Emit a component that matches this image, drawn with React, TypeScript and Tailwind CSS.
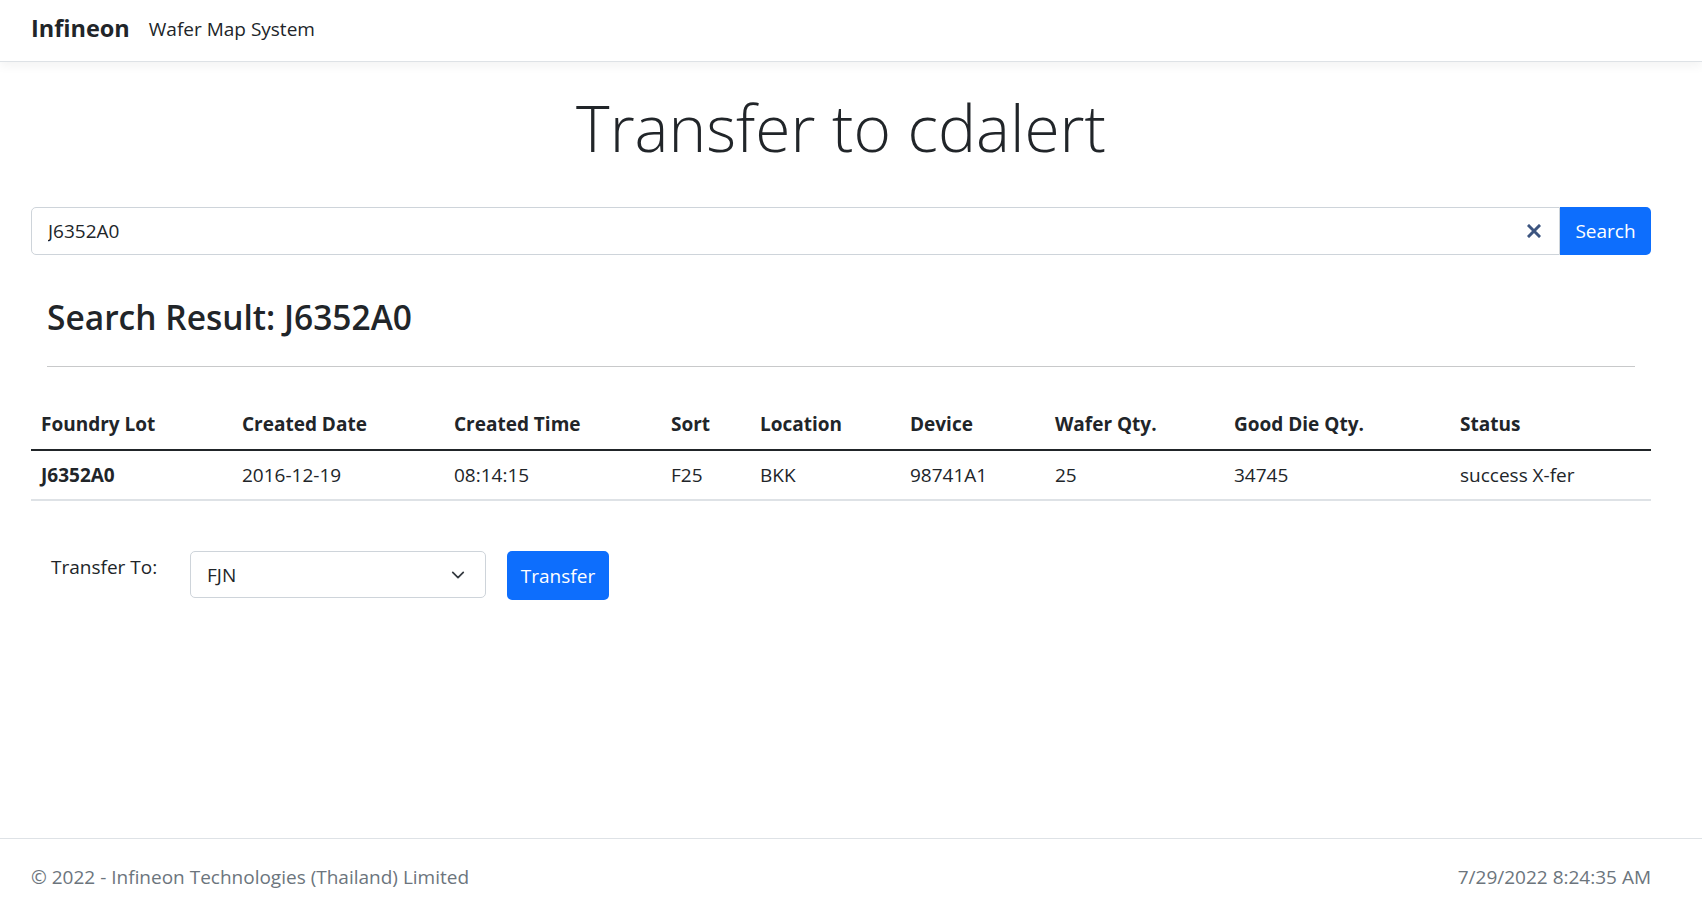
const columns = [
  { label: "Foundry Lot", width: "w-[201px]" },
  { label: "Created Date", width: "w-[212px]" },
  { label: "Created Time", width: "w-[217px]" },
  { label: "Sort", width: "w-[89px]" },
  { label: "Location", width: "w-[150px]" },
  { label: "Device", width: "w-[145px]" },
  { label: "Wafer Qty.", width: "w-[179px]" },
  { label: "Good Die Qty.", width: "w-[226px]" },
  { label: "Status", width: "" },
];

const row = [
  "J6352A0",
  "2016-12-19",
  "08:14:15",
  "F25",
  "BKK",
  "98741A1",
  "25",
  "34745",
  "success X-fer",
];

function NavBar() {
  return (
    <nav className="flex h-[62px] items-center border-b border-[#dee2e6] bg-white pb-[3px] pl-[31px] shadow-[0_4px_10px_rgba(0,0,0,0.05)]">
      <span className="text-[23.5px] font-bold text-[#212529]">Infineon</span>
      <span className="ml-[19px] text-[19px] text-[#212529]">Wafer Map System</span>
    </nav>
  );
}

function SearchBar() {
  return (
    <div className="flex h-[48px]">
      <div className="flex flex-1 items-center rounded-l-[5px] border border-[#ced4da] bg-white">
        <input
          defaultValue="J6352A0"
          className="h-full flex-1 bg-transparent pl-[16px] text-[19px] text-[#212529] outline-none"
        />
        <button className="mr-[15px] flex h-[20px] w-[20px] items-center justify-center">
          <svg width="14" height="14" viewBox="0 0 14 14">
            <path
              d="M2 2 L12 12 M12 2 L2 12"
              stroke="#3d5580"
              strokeWidth="3"
              strokeLinecap="square"
            />
          </svg>
        </button>
      </div>
      <button className="w-[91px] rounded-r-[5px] bg-[#0d6efd] text-[19px] text-white">
        Search
      </button>
    </div>
  );
}

function ResultTable() {
  return (
    <table className="w-full border-collapse text-left text-[19px] text-[#212529]">
      <thead>
        <tr className="border-b-2 border-[#212529]">
          {columns.map((c) => (
            <th key={c.label} className={`${c.width} h-[50px] px-[10px] font-bold`}>
              {c.label}
            </th>
          ))}
        </tr>
      </thead>
      <tbody>
        <tr className="border-b-2 border-[#dee2e6]">
          {row.map((v, i) => (
            <td key={i} className={`h-[50px] px-[10px] ${i === 0 ? "font-bold" : ""}`}>
              {v}
            </td>
          ))}
        </tr>
      </tbody>
    </table>
  );
}

function TransferForm() {
  return (
    <div className="mt-[50px] flex items-start">
      <label className="ml-[20px] mt-[2px] w-[139px] text-[19px] text-[#212529]">
        Transfer To:
      </label>
      <div className="flex h-[47px] w-[296px] items-center justify-between rounded-[5px] border border-[#ced4da] bg-white pl-[16px] pr-[18px]">
        <span className="mt-[2px] text-[19px] text-[#212529]">FJN</span>
        <svg width="18" height="14" viewBox="0 0 16 16">
          <path
            d="m2 5 6 6 6-6"
            fill="none"
            stroke="#343a40"
            strokeWidth="2"
            strokeLinecap="round"
            strokeLinejoin="round"
          />
        </svg>
      </div>
      <button className="ml-[21px] h-[49px] w-[102px] rounded-[5px] bg-[#0d6efd] pt-[2px] text-[19px] text-white">
        Transfer
      </button>
    </div>
  );
}

export default function App() {
  return (
    <div className="flex min-h-[916px] flex-col bg-white font-['Open_Sans',sans-serif]">
      <NavBar />
      <main className="flex-1">
        <div className="ml-[31px] w-[1620px]">
          <h1 className="mt-[24px] text-center text-[64px] leading-[84px] font-light text-[#212529]">
            Transfer to cdalert
          </h1>
          <div className="mt-[37px]">
            <SearchBar />
          </div>
          <div className="px-[16px]">
            <h2 className="mt-[39px] text-[33.5px] leading-[46px] font-semibold text-[#212529]">
              Search Result: J6352A0
            </h2>
            <hr className="mt-[26px] border-t border-[#c8c9ca]" />
          </div>
          <div className="mt-[33px]">
            <ResultTable />
          </div>
          <TransferForm />
        </div>
      </main>
      <footer className="flex h-[78px] items-center justify-between border-t border-[#dee2e6] pl-[31px] pr-[51px] text-[19px] text-[#6c757d]">
        <span>© 2022 - Infineon Technologies (Thailand) Limited</span>
        <span>7/29/2022 8:24:35 AM</span>
      </footer>
    </div>
  );
}
